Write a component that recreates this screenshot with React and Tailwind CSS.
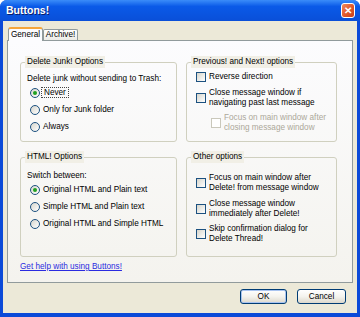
import React from "react";

function Radio({ label, checked, focus }) {
  return (
    <div className="flex h-[17px] items-center">
      <span className="ml-[3px] flex h-[10px] w-[10px] shrink-0 items-center justify-center rounded-full border border-[#1c5180] bg-linear-to-br from-[#d6d5cc] to-white">
        {checked && <span className="h-[4px] w-[4px] rounded-full bg-[#21a121]" />}
      </span>
      {focus ? (
        <span className="ml-[1px] border border-dotted border-[#444] px-[2px] leading-[9px]">{label}</span>
      ) : (
        <span className="ml-[3px] leading-[10px]">{label}</span>
      )}
    </div>
  );
}

function Check({ lines, disabled, className = "" }) {
  return (
    <div className={`flex items-center ${className}`}>
      <span
        className={
          disabled
            ? "h-[10px] w-[10px] shrink-0 border border-[#cac8bb] bg-white"
            : "h-[10px] w-[10px] shrink-0 border border-[#1c5180] bg-linear-to-br from-[#d6d5cc] to-white"
        }
      />
      <div className={disabled ? "ml-[3px] leading-[10px] text-[#aca899]" : "ml-[3px] leading-[10px]"}>
        {lines.map((l) => (
          <div key={l}>{l}</div>
        ))}
      </div>
    </div>
  );
}

// fieldset + legend draws the XP group box; padding goes on the inner div so the legend stays put
function Group({ title, className = "", inner = "", children }) {
  return (
    <fieldset className={`rounded-[3px] border border-[#d0d0bf] ${className}`}>
      <legend className="ml-[4px] bg-[#f1efe6] px-[2px] leading-[12px]">{title}</legend>
      <div className={inner}>{children}</div>
    </fieldset>
  );
}

function Button({ children, primary, className = "" }) {
  return (
    <button
      className={`flex h-[15px] items-center justify-center rounded-[3px] border border-[#003c74] bg-linear-to-b from-white via-[#f4f3ee] to-[#dcd8cc] leading-[10px] text-black ${
        primary ? "shadow-[inset_0_0_0_1px_#a9c4f0]" : ""
      } ${className}`}
    >
      {children}
    </button>
  );
}

export default function App() {
  return (
    <div className="h-[317px] w-[360px] bg-white font-['Liberation_Sans',Arial,sans-serif] text-[8.2px] text-black">
      <div className="flex h-full flex-col rounded-t-[7px] bg-[#0b4ad8]">
        {/* title bar */}
        <div className="flex h-[21px] shrink-0 items-center justify-between rounded-t-[7px] bg-linear-to-b from-[#3a8cf9] via-[#0a5ae8] via-30% to-[#0a4fd8] pl-[6px] pr-[5px]">
          <span className="text-[10.5px] font-bold text-white [text-shadow:1px_1px_0_#0a1e6a]">Buttons!</span>
          <span className="flex h-[15px] w-[14px] items-center justify-center rounded-[3px] border border-white bg-linear-to-br from-[#f08a5c] via-[#e35a2c] to-[#c8401a] text-[10px] font-bold leading-none text-white">
            ✕
          </span>
        </div>

        {/* body */}
        <div className="mx-[3px] mb-[4px] flex flex-1 flex-col bg-[#ece9d8] px-[4px] pt-[6px]">
          <div className="flex h-[13px] items-end">
            <div className="relative z-10 -mb-px ml-[1px] flex h-[14px] w-[35px] items-center justify-center rounded-t-[3px] border-x border-t-2 border-x-[#919b9c] border-t-[#f5a63a] bg-[#fcfcfe] leading-[10px]">
              General
            </div>
            <div className="flex h-[11px] w-[35px] items-center justify-center rounded-t-[2px] border-x border-t border-[#919b9c] bg-linear-to-b from-white to-[#ecebe6] leading-[10px]">
              Archive!
            </div>
          </div>

          <div className="h-[243px] border border-[#919b9c] bg-linear-to-b from-[#fcfcfe] to-[#f4f3ee] pl-[12px] pt-[15px]">
            <div className="grid grid-cols-[157px_151px] gap-x-[9px] gap-y-[9px]">
              <Group title="Delete Junk! Options" className="h-[86px]" inner="pl-[6px] pt-[6px]">
                <div className="leading-[10px]">Delete junk without sending to Trash:</div>
                <Radio label="Never" checked focus />
                <Radio label="Only for Junk folder" />
                <Radio label="Always" />
              </Group>

              <Group title="Previous! and Next! options" className="h-[86px]" inner="pl-[9px] pt-[4px]">
                <Check lines={["Reverse direction"]} />
                <Check className="mt-[6px]" lines={["Close message window if", "navigating past last message"]} />
                <Check
                  className="ml-[15px] mt-[5px]"
                  disabled
                  lines={["Focus on main window after", "closing message window"]}
                />
              </Group>

              <Group title="HTML! Options" className="h-[106px]" inner="pl-[6px] pt-[8px]">
                <div className="leading-[10px]">Switch between:</div>
                <Radio label="Original HTML and Plain text" checked />
                <Radio label="Simple HTML and Plain text" />
                <Radio label="Original HTML and Simple HTML" />
              </Group>

              <Group title="Other options" className="h-[106px]" inner="pl-[9px] pt-[10px]">
                <Check lines={["Focus on main window after", "Delete! from message window"]} />
                <Check className="mt-[6px]" lines={["Close message window", "immediately after Delete!"]} />
                <Check className="mt-[5px]" lines={["Skip confirmation dialog for", "Delete Thread!"]} />
              </Group>
            </div>
            <div className="mt-[5px] leading-[10px]">
              <span className="text-[#2b2be0] underline">Get help with using Buttons!</span>
            </div>
          </div>

          <div className="mt-[6px] flex justify-end gap-[10px] pr-[7px]">
            <Button primary className="w-[47px]">OK</Button>
            <Button className="w-[49px]">Cancel</Button>
          </div>
        </div>
      </div>
    </div>
  );
}
